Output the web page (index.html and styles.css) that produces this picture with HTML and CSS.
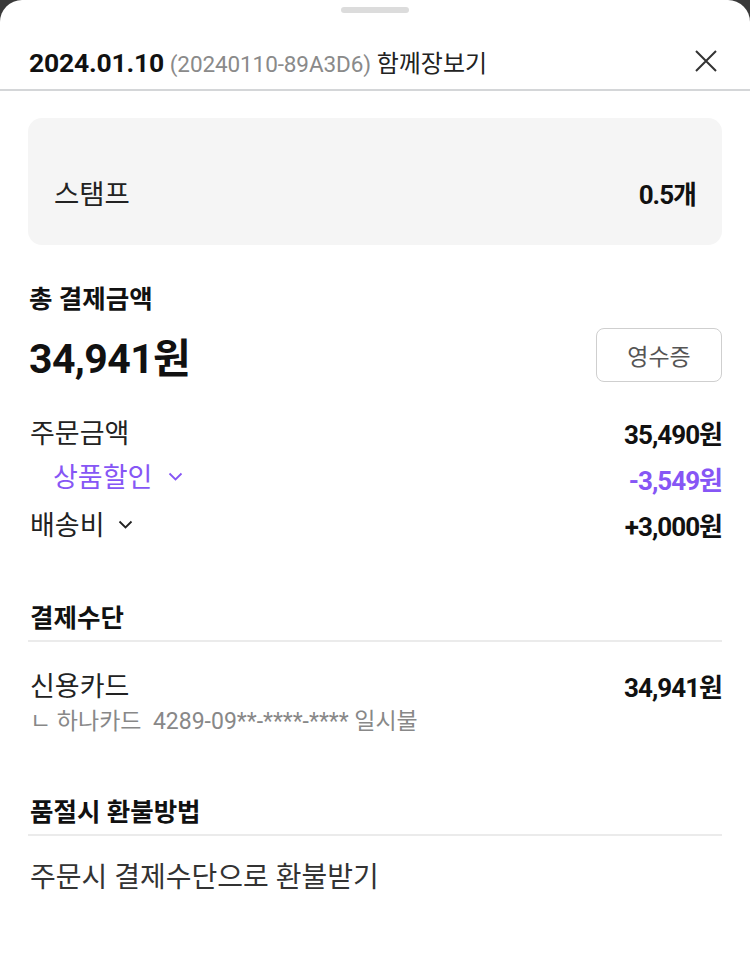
FILE: index.html
```html
<!DOCTYPE html>
<html lang="ko">
<head>
<meta charset="utf-8">
<link rel="stylesheet" href="styles.css">
</head>
<body>
<div class="sheet">
  <div class="handle-wrap"><div class="handle"></div></div>
  <header class="head">
    <div class="title"><span class="date">2024.01.10</span> <span class="code">(20240110-89A3D6)</span> <span class="store">함께장보기</span></div>
    <button class="close" aria-label="닫기">
      <svg width="24" height="24" viewBox="0 0 24 24"><path d="M2 2L22 22M22 2L2 22" stroke="#333" stroke-width="2" fill="none"/></svg>
    </button>
  </header>
  <main class="content">
    <div class="stamp">
      <span class="stamp-label">스탬프</span>
      <span class="stamp-value">0.5개</span>
    </div>

    <section class="total">
      <div class="total-label">총 결제금액</div>
      <div class="total-row">
        <span class="total-amount">34,941원</span>
        <button class="receipt">영수증</button>
      </div>
    </section>

    <div class="rows">
      <div class="row"><span class="row-label">주문금액</span><span class="row-value">35,490원</span></div>
      <div class="row discount"><span class="row-label sub">상품할인 <svg class="chev" width="15" height="9" viewBox="0 0 15 9"><path d="M1.5 1.5L7.5 7.5L13.5 1.5" stroke="currentColor" stroke-width="1.8" fill="none"/></svg></span><span class="row-value">-3,549원</span></div>
      <div class="row"><span class="row-label">배송비 <svg class="chev" width="15" height="9" viewBox="0 0 15 9"><path d="M1.5 1.5L7.5 7.5L13.5 1.5" stroke="currentColor" stroke-width="1.8" fill="none"/></svg></span><span class="row-value">+3,000원</span></div>
    </div>

    <section class="block pay-block">
      <h2 class="block-title">결제수단</h2>
      <div class="row pay"><span class="row-label">신용카드</span><span class="row-value">34,941원</span></div>
      <div class="card-detail">ㄴ 하나카드&nbsp; 4289-09**-****-**** 일시불</div>
    </section>

    <section class="block refund-block">
      <h2 class="block-title">품절시 환불방법</h2>
      <div class="refund">주문시 결제수단으로 환불받기</div>
    </section>
  </main>
</div>
</body>
</html>
```

FILE: styles.css
```css
* { box-sizing: border-box; }
html, body { margin: 0; padding: 0; }
body {
  background: #3a3a3a;
  font-family: Roboto, "Noto Sans CJK KR", sans-serif;
  color: #111;
}
.sheet {
  background: #fff;
  border-radius: 22px 22px 0 0;
  min-height: 972px;
}
.handle-wrap { display: flex; justify-content: center; padding-top: 7px; }
.handle { width: 68px; height: 6px; border-radius: 3px; background: #dcdcdc; }
.head {
  display: flex;
  align-items: center;
  justify-content: space-between;
  height: 78px;
  padding: 26px 32px 0 29px;
  border-bottom: 2px solid #d4d6d8;
}
.title { font-size: 23px; line-height: 30px; white-space: nowrap; }
.date { font-weight: 700; font-size: 26.5px; color: #111; letter-spacing: -0.2px; }
.code { color: #8a8a8a; font-size: 22.5px; letter-spacing: -0.1px; }
.store { color: #222; font-size: 24px; }
.close { border: 0; background: none; padding: 0; display: flex; margin-top: -7px; }
.content { padding: 27px 28px 0; }
.stamp {
  background: #f5f5f5;
  border-radius: 14px;
  height: 127px;
  display: flex;
  align-items: center;
  justify-content: space-between;
  padding: 21px 26px 0 26px;
  font-size: 26px;
}
.stamp-label { color: #222; font-size: 27.5px; }
.stamp-value { font-weight: 700; color: #111; letter-spacing: -1px; }
.total { padding-top: 39px; }
.total-label { font-size: 25.5px; line-height: 30px; font-weight: 700; padding-left: 1px; }
.total-row {
  display: flex;
  justify-content: space-between;
  align-items: center;
  margin-top: 14px;
  height: 54px;
}
.total-amount { font-size: 41px; font-weight: 700; padding-left: 1px; letter-spacing: -0.6px; margin-top: -1px; }
.receipt {
  width: 126px;
  height: 54px;
  border: 1px solid #cfcfcf;
  border-radius: 8px;
  background: #fff;
  font-family: inherit;
  font-size: 23px;
  color: #555;
}
.rows { display: flex; flex-direction: column; gap: 6px; margin-top: 29px; }
.row {
  display: flex;
  justify-content: space-between;
  align-items: center;
  height: 40px;
  font-size: 27px;
}
.row-label { color: #222; display: flex; align-items: center; gap: 13px; padding-left: 2px; }
.row-label.sub { padding-left: 25px; gap: 16px; margin-top: -3px; }
.row-value { font-weight: 700; color: #111; letter-spacing: -1px; font-size: 26px; margin-top: 2px; }
.discount .row-label, .discount .row-value { color: #8656f5; }
.chev { margin-top: 2px; }
.block-title {
  margin: 0;
  font-size: 25.5px;
  line-height: 30px;
  font-weight: 700;
  padding: 0 2px 7px;
  border-bottom: 2px solid #ebebeb;
}
.pay-block { margin-top: 60px; }
.pay { margin-top: 22px; }
.card-detail { font-size: 23px; line-height: 30px; color: #888; padding-left: 2px; margin-top: 3px; }
.refund-block { margin-top: 60px; }
.refund { font-size: 28px; line-height: 36px; color: #333; margin-top: 24px; padding-left: 2px; }
```
